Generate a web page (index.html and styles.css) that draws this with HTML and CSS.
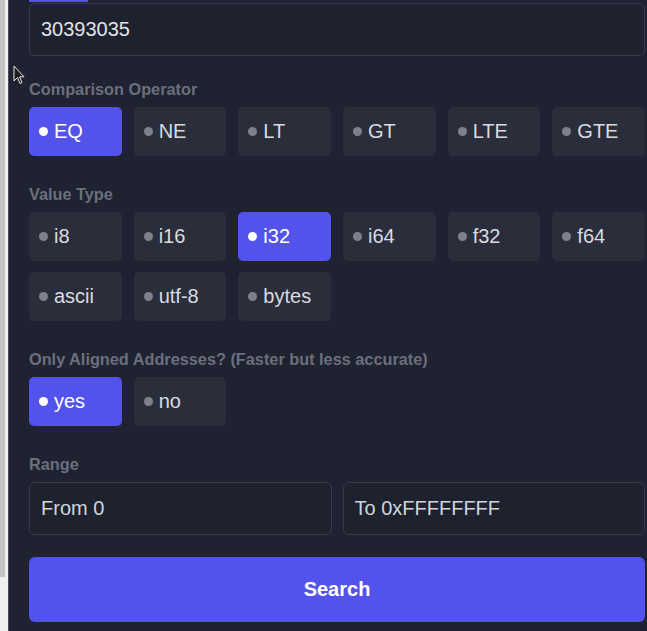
FILE: index.html
```html
<!DOCTYPE html>
<html lang="en">
<head>
<meta charset="utf-8">
<title>Memory Search</title>
<link rel="stylesheet" href="styles.css">
</head>
<body>
<div class="rail"><div class="thumb"></div></div>
<main class="panel">
  <div class="tabbar"></div>
  <input class="field" type="text" value="30393035">

  <div class="label">Comparison Operator</div>
  <div class="grid">
    <button class="opt active"><span class="dot"></span>EQ</button>
    <button class="opt"><span class="dot"></span>NE</button>
    <button class="opt"><span class="dot"></span>LT</button>
    <button class="opt"><span class="dot"></span>GT</button>
    <button class="opt"><span class="dot"></span>LTE</button>
    <button class="opt"><span class="dot"></span>GTE</button>
  </div>

  <div class="label">Value Type</div>
  <div class="grid">
    <button class="opt"><span class="dot"></span>i8</button>
    <button class="opt"><span class="dot"></span>i16</button>
    <button class="opt active"><span class="dot"></span>i32</button>
    <button class="opt"><span class="dot"></span>i64</button>
    <button class="opt"><span class="dot"></span>f32</button>
    <button class="opt"><span class="dot"></span>f64</button>
    <button class="opt"><span class="dot"></span>ascii</button>
    <button class="opt"><span class="dot"></span>utf-8</button>
    <button class="opt"><span class="dot"></span>bytes</button>
  </div>

  <div class="label">Only Aligned Addresses? (Faster but less accurate)</div>
  <div class="grid">
    <button class="opt active"><span class="dot"></span>yes</button>
    <button class="opt"><span class="dot"></span>no</button>
  </div>

  <div class="label">Range</div>
  <div class="range">
    <input class="field" type="text" value="From 0">
    <input class="field" type="text" value="To 0xFFFFFFFF">
  </div>

  <button class="search">Search</button>

  <svg class="cursor" width="12" height="20" viewBox="0 0 12 20" aria-hidden="true">
    <path d="M1 1 L1 16 L4.5 12.5 L7 18.5 L9 17.6 L6.6 11.8 L11 11.8 Z" fill="#1a1a1a" stroke="#e8e8e8" stroke-width="1"/>
  </svg>
</main>
</body>
</html>
```

FILE: styles.css
```css
* { box-sizing: border-box; }

html, body {
  margin: 0;
  height: 100%;
}

body {
  display: flex;
  background: #efefef;
  font-family: "Liberation Sans", Arial, sans-serif;
  overflow: hidden;
}

.rail {
  width: 8px;
  flex: none;
  background: #efefef;
}

.thumb {
  width: 5px;
  height: 577px;
  background: #c4c4c4;
}

.panel {
  position: relative;
  flex: 1;
  height: 631px;
  background: #1f2230;
  border-left: 1px solid #4a4d58;
  padding: 0 2px 0 20px;
  display: flex;
  flex-direction: column;
}

.tabbar {
  width: 59px;
  height: 2px;
  background: #5353ec;
  margin-bottom: 1px;
  flex: none;
}

.field {
  display: block;
  width: 100%;
  height: 53px;
  background: #1e212e;
  border: 1px solid #383c4a;
  border-radius: 6px;
  color: #e2e4ea;
  font-family: "Liberation Sans", Arial, sans-serif;
  font-size: 20px;
  padding: 0 11px;
  outline: none;
}

.label {
  margin-top: 23px;
  height: 20px;
  line-height: 20px;
  font-size: 16.3px;
  font-weight: bold;
  color: #6b6f7d;
  margin-bottom: 8px;
  white-space: nowrap;
}

.grid + .label { margin-top: 28px; }

.grid {
  display: grid;
  grid-template-columns: repeat(6, 1fr);
  gap: 11px 12px;
}

.opt {
  height: 49px;
  border: none;
  border-radius: 5px;
  background: #2a2e3b;
  color: #d9dbe1;
  font-family: "Liberation Sans", Arial, sans-serif;
  font-size: 20px;
  display: flex;
  align-items: center;
  padding: 0 0 0 10px;
  text-align: left;
}

.dot {
  width: 9px;
  height: 9px;
  border-radius: 50%;
  background: #7d818e;
  margin-right: 6px;
  flex: none;
}

.opt.active {
  background: #5353ec;
  color: #ffffff;
}

.opt.active .dot { background: #ffffff; }

.range {
  display: grid;
  grid-template-columns: 1fr 1fr;
  gap: 11px;
}

.range .field { color: #d2d4da; }

.search {
  margin-top: 22px;
  height: 65px;
  width: 100%;
  border: none;
  border-radius: 6px;
  background: #5353ec;
  color: #ffffff;
  font-family: "Liberation Sans", Arial, sans-serif;
  font-size: 20px;
  font-weight: bold;
}

.cursor {
  position: absolute;
  left: 4px;
  top: 65px;
}
```
